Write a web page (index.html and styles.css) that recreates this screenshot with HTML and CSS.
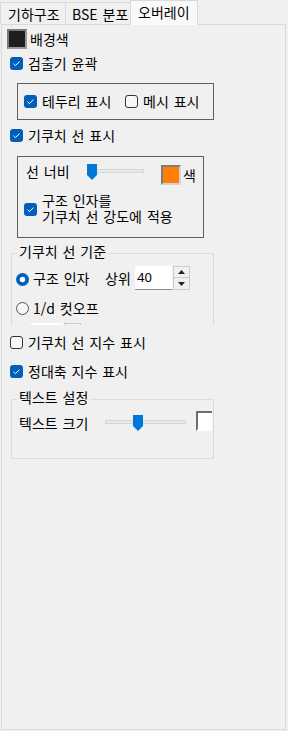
FILE: index.html
```html
<!DOCTYPE html>
<html lang="ko">
<head>
<meta charset="utf-8">
<title>오버레이</title>
<link rel="stylesheet" href="styles.css">
</head>
<body>
<div class="tabs">
  <div class="tab t1">기하구조</div>
  <div class="tab t2">BSE 분포</div>
  <div class="tab active">오버레이</div>
</div>
<div class="page">
  <div class="row row-bg"><span class="swatch dark"></span><span class="lbl">배경색</span></div>

  <div class="row row-det">
    <svg class="cb" width="13" height="13" viewBox="0 0 13 13"><rect width="13" height="13" rx="3" fill="#005fb8"/><path d="M3.5 6.8 L5.4 8.6 L9.5 4.6" fill="none" stroke="#fff" stroke-width="1"/></svg>
    <span class="lbl">검출기 윤곽</span>
  </div>

  <div class="box box1">
    <div class="item item-wide">
      <svg class="cb" width="13" height="13" viewBox="0 0 13 13"><rect width="13" height="13" rx="3" fill="#005fb8"/><path d="M3.5 6.8 L5.4 8.6 L9.5 4.6" fill="none" stroke="#fff" stroke-width="1"/></svg>
      <span class="lbl">테두리 표시</span>
    </div>
    <div class="item">
      <svg class="cb" width="13" height="13" viewBox="0 0 13 13"><rect x="0.5" y="0.5" width="12" height="12" rx="2.5" fill="#f7f7f7" stroke="#333"/></svg>
      <span class="lbl">메시 표시</span>
    </div>
  </div>

  <div class="row row-kik">
    <svg class="cb" width="13" height="13" viewBox="0 0 13 13"><rect width="13" height="13" rx="3" fill="#005fb8"/><path d="M3.5 6.8 L5.4 8.6 L9.5 4.6" fill="none" stroke="#fff" stroke-width="1"/></svg>
    <span class="lbl">기쿠치 선 표시</span>
  </div>

  <div class="box box2">
    <div class="lw-row">
      <span class="lw-label">선 너비</span>
      <div class="slider s1">
        <div class="track"></div>
        <svg class="thumb" style="left:0px" width="10" height="16" viewBox="0 0 10 16"><path d="M0 0 H10 V11 L5 16 L0 11 Z" fill="#0078d7"/></svg>
      </div>
      <span class="swatch orange"></span>
      <span class="color-lbl">색</span>
    </div>
    <div class="apply-row">
      <svg class="cb cb-apply" width="13" height="13" viewBox="0 0 13 13"><rect width="13" height="13" rx="3" fill="#005fb8"/><path d="M3.5 6.8 L5.4 8.6 L9.5 4.6" fill="none" stroke="#fff" stroke-width="1"/></svg>
      <span class="two-line"><span class="ln">구조 인자를</span><span class="ln">기쿠치 선 강도에 적용</span></span>
    </div>
  </div>

  <div class="clip3">
    <fieldset class="grp grp3">
      <legend>기쿠치 선 기준</legend>
      <div class="rad-row r1">
        <svg class="rad" width="13" height="13" viewBox="0 0 13 13"><circle cx="6.5" cy="6.5" r="6.5" fill="#005fb8"/><circle cx="6.5" cy="6.5" r="2.7" fill="#fff"/></svg>
        <span class="lbl rad-lbl">구조 인자</span>
        <span class="lbl top-lbl">상위</span>
        <div class="spin">
          <div class="spin-text">40</div>
          <div class="spin-btns">
            <div class="spin-btn"><svg width="7" height="4" viewBox="0 0 7 4"><path d="M0 4 L3.5 0 L7 4 Z" fill="#222"/></svg></div>
            <div class="spin-btn"><svg width="7" height="4" viewBox="0 0 7 4"><path d="M0 0 L3.5 4 L7 0 Z" fill="#222"/></svg></div>
          </div>
        </div>
      </div>
      <div class="rad-row r2">
        <svg class="rad" width="13" height="13" viewBox="0 0 13 13"><circle cx="6.5" cy="6.5" r="6" fill="#f7f7f7" stroke="#555"/></svg>
        <span class="lbl">1/d 컷오프</span>
      </div>
      <div class="cut-row">
        <div class="cut-text"></div>
        <div class="cut-btn"></div>
      </div>
    </fieldset>
  </div>

  <div class="row row-idx">
    <svg class="cb" width="13" height="13" viewBox="0 0 13 13"><rect x="0.5" y="0.5" width="12" height="12" rx="2.5" fill="#f7f7f7" stroke="#333"/></svg>
    <span class="lbl">기쿠치 선 지수 표시</span>
  </div>

  <div class="row row-zone">
    <svg class="cb" width="13" height="13" viewBox="0 0 13 13"><rect width="13" height="13" rx="3" fill="#005fb8"/><path d="M3.5 6.8 L5.4 8.6 L9.5 4.6" fill="none" stroke="#fff" stroke-width="1"/></svg>
    <span class="lbl">정대축 지수 표시</span>
  </div>

  <fieldset class="grp grp4">
    <legend>텍스트 설정</legend>
    <div class="ts-row">
      <span class="ts-label">텍스트 크기</span>
      <div class="slider s2">
        <div class="track"></div>
        <svg class="thumb" style="left:28px" width="10" height="16" viewBox="0 0 10 16"><path d="M0 0 H10 V11 L5 16 L0 11 Z" fill="#0078d7"/></svg>
      </div>
      <span class="sw-clip"><span class="swatch white"></span></span>
    </div>
  </fieldset>
</div>
</body>
</html>
```

FILE: styles.css
```css
* { box-sizing: border-box; }
html, body { margin: 0; padding: 0; }
body {
  width: 288px;
  height: 731px;
  overflow: hidden;
  background: #f0f0f0;
  color: #000;
  font-family: "Noto Sans CJK KR", "Noto Sans", sans-serif;
  font-size: 14px;
  line-height: 15px;
  word-spacing: 1px;
}

/* tabs */
.tabs { display: flex; height: 24px; }
.tab {
  height: 22px;
  margin-top: 2px;
  padding-top: 4px;
  border-top: 1px solid #d9d9d9;
  border-right: 1px solid #d9d9d9;
  background: #f0f0f0;
  white-space: nowrap;
}
.t1 { width: 66px; padding-left: 7px; border-left: 1px solid #d9d9d9; }
.t2 { width: 64px; padding-left: 6px; border-right: none; }
.tab.active {
  position: relative;
  z-index: 1;
  width: 68px;
  height: 25px;
  margin-top: 0;
  padding-left: 7px;
  border-left: 1px solid #d9d9d9;
  background: #f9f9f9;
}

/* page */
.page {
  margin-left: 1px;
  width: 285px;
  height: 706px;
  border: 1px solid #d9d9d9;
  background: #f0f0f0;
}

.row { display: flex; align-items: center; height: 15px; }
.cb, .rad { flex: none; display: block; }
.lbl { white-space: nowrap; }

.row-bg { height: 20px; margin-top: 4px; padding-left: 5px; }
.swatch {
  flex: none;
  display: block;
  width: 20px;
  height: 20px;
  border: 2px solid;
  border-color: #7c7c7c #d4d4d4 #d4d4d4 #7c7c7c;
}
.swatch.dark { background: #1e1e1e; border-color: #7a7a7a #9a9a9a #9a9a9a #7a7a7a; }
.row-bg .lbl { margin-left: 3px; }

.row-det { margin-top: 7px; padding-left: 8px; }
.row .cb + .lbl { margin-left: 5px; }

/* fixed-border boxes */
.box { border: 1px solid #5f5f5f; margin-left: 15px; }
.box1 {
  width: 197px;
  height: 37px;
  margin-top: 12px;
  padding: 10px 0 0 6px;
  display: flex;
}
.item { display: flex; align-items: center; height: 15px; }
.item .lbl { margin-left: 5px; }
.item-wide { width: 101px; }

.row-kik { margin-top: 8px; padding-left: 8px; }

.box2 {
  width: 187px;
  height: 82px;
  margin-top: 13px;
  padding: 7px 0 0 0;
}
.lw-row { display: flex; align-items: flex-start; }
.lw-label { width: 69px; padding-left: 8px; white-space: nowrap; }
.slider { position: relative; height: 16px; flex: none; }
.track {
  margin-top: 5px;
  height: 4px;
  background: #e7eaea;
  border: 1px solid #d6d6d6;
}
.thumb { position: absolute; top: 0; display: block; }
.s1 { width: 57px; }
.orange { background: #ff8000; margin-left: 17px; margin-top: 1px; }
.color-lbl { margin-left: 2px; margin-top: 4px; }

.apply-row { display: flex; align-items: flex-start; margin-top: 7px; padding-left: 6px; }
.cb-apply { margin-top: 11px; }
.two-line { margin-left: 5px; display: flex; flex-direction: column; }
.ln { display: block; height: 16px; line-height: 16px; white-space: nowrap; }

/* etched group boxes */
.grp {
  margin: 0 0 0 9px;
  padding: 0;
  width: 203px;
  border: 1px solid #dcdcdc;
  min-width: 0;
}
.grp legend {
  margin-left: 5px;
  padding: 0 2px 4px 2px;
  line-height: 14px;
}

.clip3 { height: 84px; margin-top: 3px; padding-top: 3px; overflow: hidden; }
.grp3 { height: 120px; }
.rad-row { display: flex; align-items: center; padding-left: 4px; }
.r1 { margin-top: 4px; height: 24px; }
.rad-lbl { width: 72px; margin-left: 4px; }
.r1 .rad { margin-top: 3px; }
.top-lbl { width: 30px; }
.r2 { margin-top: 11px; height: 15px; }
.r2 .lbl { margin-left: 4px; }

.spin { display: flex; height: 24px; }
.spin-text {
  width: 37px;
  height: 24px;
  background: #fff;
  border-bottom: 1px solid #8a8a8a;
  padding: 4px 0 0 2px;
  font-family: "Noto Sans", "Noto Sans CJK KR", sans-serif;
  font-size: 13px;
}
.spin-btns { display: flex; flex-direction: column; margin-left: 1px; }
.spin-btn {
  width: 17px;
  height: 12px;
  border: 1px solid #cccccc;
  background: #f0f0f0;
  display: flex;
  align-items: center;
  justify-content: center;
}
.spin-btn + .spin-btn { border-top: none; }

.cut-row { display: flex; margin-top: 7px; padding-left: 19px; }
.cut-text { width: 32px; height: 20px; background: #fff; }
.cut-btn { width: 17px; height: 20px; margin-left: 1px; border: 1px solid #cccccc; }

.row-idx { margin-top: 10px; padding-left: 8px; }
.row-zone { margin-top: 14px; padding-left: 8px; }

.grp4 { margin-top: 11px; height: 69px; }
.ts-row { display: flex; align-items: flex-start; padding: 3px 0 0 7px; }
.ts-label { width: 86px; margin-top: 5px; white-space: nowrap; }
.s2 { width: 81px; margin-top: 4px; }
.sw-clip { display: block; flex: none; width: 16px; height: 20px; margin-left: 10px; overflow: hidden; }
.swatch.white {
  background: #fff;
  width: 20px;
  height: 20px;
  border-color: #6e6e6e #fff #fff #6e6e6e;
}
```
